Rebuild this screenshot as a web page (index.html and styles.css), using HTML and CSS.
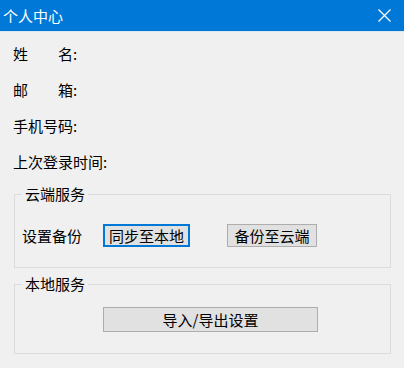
FILE: index.html
```html
<!DOCTYPE html>
<html lang="zh-CN">
  <head>
    <meta charset="UTF-8" />
    <title>个人中心</title>
    <link rel="stylesheet" href="styles.css">
  </head>
  <body>
    <div class="window">
      <header class="titlebar">
        <span class="title">个人中心</span>
        <span class="close">
          <svg width="13" height="13" viewBox="0 0 13 13">
            <path d="M0.5 0.5 L12.5 12.5 M12.5 0.5 L0.5 12.5" stroke="#fff" stroke-width="1.3" fill="none" />
          </svg>
        </span>
      </header>

      <main class="content">
        <div class="info">
          <div class="info-row"><span class="spread"><span>姓</span><span>名</span></span>:</div>
          <div class="info-row"><span class="spread"><span>邮</span><span>箱</span></span>:</div>
          <div class="info-row">手机号码:</div>
          <div class="info-row">上次登录时间:</div>
        </div>

        <fieldset class="group group-cloud">
          <legend>云端服务</legend>
          <div class="backup-row">
            <span class="backup-label">设置备份</span>
            <button class="btn btn-focus">同步至本地</button>
            <button class="btn btn-upload">备份至云端</button>
          </div>
        </fieldset>

        <fieldset class="group group-local">
          <legend>本地服务</legend>
          <div class="local-row">
            <button class="btn btn-wide">导入/导出设置</button>
          </div>
        </fieldset>
      </main>
    </div>
  </body>
</html>
```

FILE: styles.css
```css
/* Base */
* {
  box-sizing: border-box;
}

body {
  margin: 0;
  width: 404px;
  height: 368px;
  overflow: hidden;
  background-color: #f0f0f0;
  font-family: "Noto Sans CJK SC", "Noto Sans", sans-serif;
  font-size: 15px;
  color: #000;
}

/* Title bar */
.titlebar {
  height: 32px;
  background-color: #0078d7;
  border-bottom: 1px solid #dfe8f2;
  display: flex;
  align-items: center;
  justify-content: space-between;
  padding: 0 13px 0 3px;
  color: #fff;
}

.title {
  line-height: 16px;
}

.close {
  display: flex;
  width: 13px;
  height: 13px;
}

/* Content */
.content {
  padding: 4px 13px 0 13px;
}

.info-row {
  height: 36px;
  line-height: 36px;
  display: flex;
}

.spread {
  width: 60px;
  display: flex;
  justify-content: space-between;
}

/* Group boxes */
.group {
  margin: 6px 0 0 1px;
  padding: 0 0 20px 7px;
  border: 1px solid #dcdcdc;
  min-width: 0;
}

.group legend {
  padding: 0 3px;
  line-height: 16px;
}

.group-local {
  margin-top: 8px;
  padding-bottom: 21px;
}

.backup-row {
  margin-top: 22px;
  height: 23px;
  display: flex;
  align-items: center;
}

.backup-label {
  width: 60px;
  line-height: 16px;
}

.local-row {
  margin-top: 15px;
  display: flex;
}

/* Buttons */
.btn {
  height: 23px;
  width: 87px;
  padding: 0;
  margin: 0;
  border: 1px solid #adadad;
  background-color: #e1e1e1;
  font-family: inherit;
  font-size: 15px;
  line-height: 16px;
  color: #000;
}

.btn-focus {
  margin-left: 21px;
  border: 2px solid #0078d7;
}

.btn-upload {
  margin-left: 37px;
  width: 90px;
}

.btn-wide {
  margin-left: 81px;
  width: 215px;
  height: 25px;
}
```
